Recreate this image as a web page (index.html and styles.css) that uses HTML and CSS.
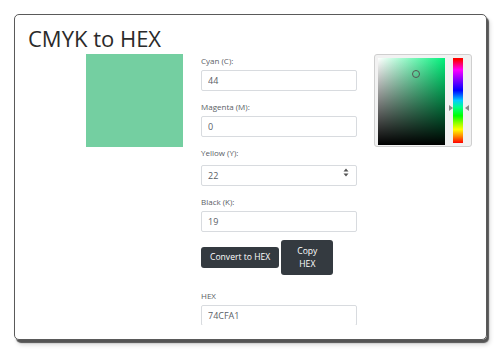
FILE: index.html
```html
<!DOCTYPE html>
<html lang="en">

<head>
    <meta charset="utf-8">
    <meta name="viewport" content="width=device-width, initial-scale=1.0">
    <title>CMYK to HEX</title>
    <link rel="stylesheet" href="styles.css">
</head>

<body>
    <div class="kort">
        <h1>CMYK to HEX</h1>
        <div class="indhold">
            <div class="farve"></div>

            <form class="felter">
                <label for="cyan">Cyan (C):</label>
                <input id="cyan" type="text" value="44">

                <label for="magenta">Magenta (M):</label>
                <input id="magenta" type="text" value="0">

                <label for="yellow">Yellow (Y):</label>
                <div class="spin-felt">
                    <input id="yellow" type="text" value="22">
                    <!-- pilene fra et number-felt -->
                    <svg class="spin" width="6" height="9" viewBox="0 0 6 9">
                        <path d="M3 0.5 L5.5 3.5 L0.5 3.5 Z M3 8.5 L5.5 5.5 L0.5 5.5 Z" fill="#555" />
                    </svg>
                </div>

                <label for="black">Black (K):</label>
                <input id="black" type="text" value="19">

                <div class="knapper">
                    <button type="button" class="knap">Convert to HEX</button>
                    <button type="button" class="knap hoej">Copy<br>HEX</button>
                </div>

                <label for="hex">HEX</label>
                <input id="hex" type="text" value="74CFA1">
            </form>

            <div class="vaelger">
                <div class="felt">
                    <span class="markoer"></span>
                </div>
                <div class="hue"></div>
                <span class="pil venstre"></span>
                <span class="pil hoejre"></span>
            </div>
        </div>
    </div>
</body>

</html>
```

FILE: styles.css
```css
body {
    margin: 0;
    padding: 14px;
    font-family: 'Open Sans', sans-serif;
    color: #212529;
    background-color: #fff;
}

.kort {
    width: 471px;
    height: 324px;
    border: 1px solid #5a5a5a;
    border-radius: 5px;
    box-shadow: 2px 3px 1px #555, 3px 5px 4px rgba(0, 0, 0, 0.15);
    box-sizing: content-box;
    overflow: hidden;
}

h1 {
    margin: 0;
    padding: 8px 0 0 13px;
    font-size: 22px;
    font-weight: 400;
    line-height: 30px;
    color: #2a2a2a;
}

.indhold {
    display: flex;
    align-items: flex-start;
    height: 271px;
    overflow: hidden;
    padding-top: 1px;
}

.farve {
    width: 97px;
    height: 93px;
    margin-left: 71px;
    background-color: #74cfa1;
}

.felter {
    display: flex;
    flex-direction: column;
    width: 156px;
    margin-left: 18px;
}

label {
    font-size: 8px;
    line-height: 12px;
    color: #5a6066;
    margin: 1px 0 3px;
}

input {
    box-sizing: border-box;
    width: 156px;
    height: 21px;
    margin: 0 0 9px;
    padding: 0 6px;
    border: 1px solid #d8dbdf;
    border-radius: 2px;
    font-family: 'Open Sans', sans-serif;
    font-size: 9px;
    color: #5a6066;
    background: #fff;
}

.spin-felt {
    position: relative;
}

.spin {
    position: absolute;
    right: 8px;
    top: 6px;
}

.knapper {
    display: flex;
    align-items: center;
    gap: 2px;
    margin: -1px 0 14px;
}

.knap {
    height: 21px;
    padding: 0 9px;
    border: none;
    border-radius: 3px;
    background-color: #343a40;
    color: #fff;
    font-family: 'Open Sans', sans-serif;
    font-size: 8.6px;
    line-height: 13px;
}

.hoej {
    height: 35px;
    width: 52px;
}

.vaelger {
    position: relative;
    display: flex;
    gap: 8px;
    margin-left: 17px;
    width: 90px;
    height: 85px;
    padding: 3px;
    border: 1px solid #cfcfcf;
    border-radius: 3px;
    background-color: #f2f2f2;
}

.felt {
    position: relative;
    width: 67px;
    height: 87px;
    background: linear-gradient(to top, #000, rgba(0, 0, 0, 0)), linear-gradient(to right, #fff, #00f07a);
}

.markoer {
    position: absolute;
    left: 34px;
    top: 12px;
    width: 6px;
    height: 6px;
    border: 1px solid #555;
    border-radius: 50%;
}

.hue {
    width: 10px;
    height: 85px;
    background: linear-gradient(to bottom, #f00 2%, #f0f 14%, #8000ff 26%, #00f 38%, #0cf 50%, #0f8 58%, #0f0 68%, #8f0 76%, #ff0 84%, #f80 92%, #f00 100%);
}

.pil {
    position: absolute;
    top: 50px;
    width: 0;
    height: 0;
    border-top: 3px solid transparent;
    border-bottom: 3px solid transparent;
}

.venstre {
    left: 74px;
    border-left: 4px solid #888;
}

.hoejre {
    left: 90px;
    border-right: 4px solid #888;
}
```
